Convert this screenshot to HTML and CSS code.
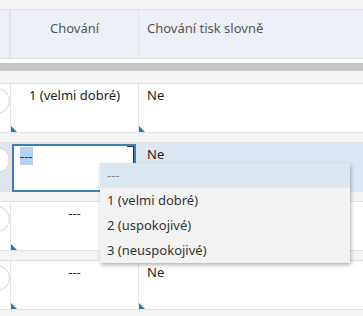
FILE: index.html
```html
<!DOCTYPE html>
<html lang="cs">
<head>
    <meta charset="UTF-8">
    <title>Chování</title>
    <link rel="stylesheet" href="styles.css">
</head>
<body>
    <div class="grid">
        <div class="head">
            <div class="cell side"></div>
            <div class="cell mid">Chování</div>
            <div class="cell last">Chování tisk slovně</div>
        </div>
        <div class="band"></div>

        <div class="row">
            <div class="cell side"><span class="ring"></span></div>
            <div class="cell mid">1 (velmi dobré)<span class="tri"></span></div>
            <div class="cell last">Ne<span class="tri"></span></div>
        </div>
        <div class="gap"></div>

        <div class="row active">
            <div class="cell side"><span class="ring"></span></div>
            <div class="cell mid edit">
                <div class="editor"><span class="sel">---</span></div>
            </div>
            <div class="cell last">Ne</div>
        </div>
        <div class="gap"></div>

        <div class="row">
            <div class="cell side"><span class="ring"></span></div>
            <div class="cell mid">---<span class="tri"></span></div>
            <div class="cell last"></div>
        </div>
        <div class="gap"></div>

        <div class="row">
            <div class="cell side"><span class="ring"></span></div>
            <div class="cell mid">---<span class="tri"></span></div>
            <div class="cell last">Ne<span class="tri"></span></div>
        </div>
        <div class="gap"></div>
    </div>

    <ul class="dropdown">
        <li class="current">---</li>
        <li>1 (velmi dobré)</li>
        <li>2 (uspokojivé)</li>
        <li>3 (neuspokojivé)</li>
    </ul>
</body>
</html>
```

FILE: styles.css
```css
body {
    margin: 0;
    width: 363px;
    height: 316px;
    overflow: hidden;
    font-family: "Noto Sans", Arial, sans-serif;
    font-size: 13px;
    color: #1e1e1e;
    background-color: #f4f4f4;
    position: relative;
}
.grid {
    width: 363px;
}
.head,
.row {
    display: grid;
    grid-template-columns: 11px 128px 1fr;
}
.head {
    margin-top: 9px;
    height: 48px;
    background-color: #edf1f7;
    border-top: 1px solid #dde2ea;
    border-bottom: 1px solid #dde2ea;
    color: #555;
}
.head .cell {
    padding-top: 9px;
}
.head .side {
    border-right: 1px solid #dde2ea;
    box-shadow: inset -3px 0 0 -2px #dde2ea;
}
.band {
    height: 25px;
    border-top: 4px solid #fbfbfb;
    box-sizing: border-box;
    background: linear-gradient(#c7c7c7 0 8px, #f4f4f4 8px);
    border-bottom: 1px solid #e2e2e2;
}
.cell {
    position: relative;
    border-right: 1px solid #e4e4e4;
    box-sizing: border-box;
}
.cell.last {
    border-right: none;
    padding-left: 8px;
}
.cell.mid {
    text-align: center;
}
.row {
    height: 48px;
    background-color: #fff;
}
.row .cell {
    padding-top: 2px;
}
.row .cell.side {
    overflow: hidden;
    padding-top: 0;
}
.ring {
    display: block;
    width: 24px;
    height: 24px;
    margin: 4px 0 0 -16px;
    border: 1px solid #d6d6d6;
    border-radius: 50%;
    background-color: #fff;
}
.row.active {
    background-color: #dde7f3;
}
.row.active .cell.mid {
    border-right-color: #dde7f3;
}
.gap {
    height: 11px;
    border-top: 1px solid #e2e2e2;
    border-bottom: 1px solid #e2e2e2;
    box-sizing: border-box;
}
.tri {
    position: absolute;
    left: 0;
    bottom: 0;
    width: 0;
    height: 0;
    border-left: 6px solid #2e76a8;
    border-top: 6px solid transparent;
}
.cell.edit {
    padding: 1px 2px 0 1px;
}
.editor {
    position: relative;
    height: 48px;
    box-sizing: border-box;
    border: 2px solid #3f7fbd;
    background-color: #fff;
    text-align: left;
    padding: 1px 0 0 6px;
}
.editor::after {
    content: "";
    position: absolute;
    top: 0;
    right: 0;
    width: 6px;
    height: 20px;
    border-top: 1px solid #333;
    border-right: 1px solid #333;
}
.sel {
    background-color: #b4d3f3;
    color: #333;
}
.dropdown {
    position: absolute;
    left: 100px;
    top: 163px;
    width: 250px;
    margin: 0;
    padding: 0;
    list-style: none;
    background-color: #f3f3f3;
    box-shadow: 1px 2px 4px rgba(0, 0, 0, 0.3);
}
.dropdown li {
    height: 25px;
    line-height: 25px;
    padding-left: 7px;
    color: #333;
}
.dropdown li.current {
    background-color: #dce6f1;
    color: #888;
}
```
